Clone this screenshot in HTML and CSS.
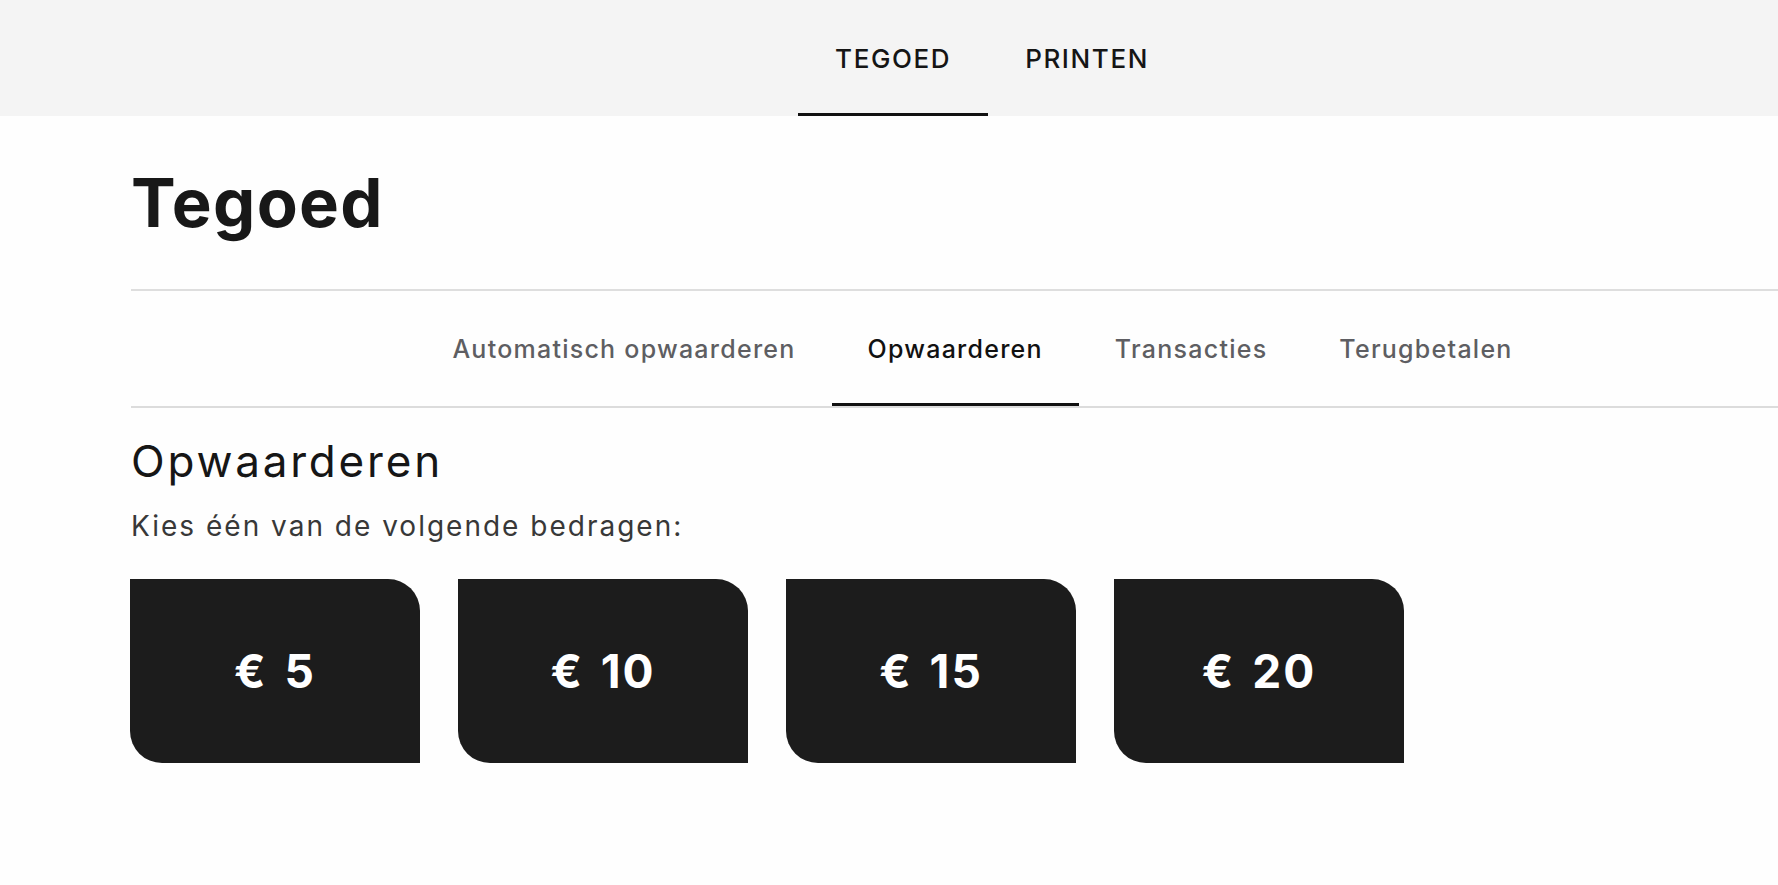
FILE: index.html
```html
<!DOCTYPE html>
<html lang="nl">
<head>
<meta charset="utf-8">
<title>Tegoed</title>
<link rel="stylesheet" href="styles.css">
</head>
<body>
<div class="page">
  <header class="topbar">
    <nav class="topnav">
      <a class="topnav-item is-active">TEGOED</a>
      <a class="topnav-item">PRINTEN</a>
    </nav>
  </header>
  <main class="content">
    <div class="title-block">
      <h1 class="title">Tegoed</h1>
    </div>
    <nav class="subnav">
      <a class="subnav-item">Automatisch opwaarderen</a>
      <a class="subnav-item is-active">Opwaarderen</a>
      <a class="subnav-item">Transacties</a>
      <a class="subnav-item">Terugbetalen</a>
    </nav>
    <section class="topup">
      <h2 class="topup-title">Opwaarderen</h2>
      <p class="topup-lead">Kies één van de volgende bedragen:</p>
      <div class="amounts">
        <button class="amount amount-5">€ 5</button>
        <button class="amount amount-10">€ 10</button>
        <button class="amount amount-15">€ 15</button>
        <button class="amount amount-20">€ 20</button>
      </div>
    </section>
  </main>
</div>
</body>
</html>
```
FILE: styles.css
```css
html, body {
  margin: 0;
  padding: 0;
  overflow: hidden;
  background: #fefefe;
}
body {
  font-family: Inter, "Noto Sans", "DejaVu Sans", sans-serif;
  color: #1a1a1a;
}
.page {
  width: 1976px;
}
.topbar {
  background: #f4f4f4;
  height: 116px;
}
.topnav {
  display: flex;
  justify-content: center;
  height: 100%;
  padding-left: 8px;
}
.topnav-item {
  display: flex;
  align-items: center;
  box-sizing: border-box;
  height: 116px;
  padding: 3px 37px 0 37px;
  font-size: 26px;
  font-weight: 500;
  letter-spacing: 1.6px;
  color: #151515;
  border-bottom: 3px solid transparent;
}
.topnav-item.is-active {
  border-bottom-color: #111;
}
.content {
  padding-left: 131px;
  padding-right: 142px;
}
.title-block {
  padding-top: 53px;
  padding-bottom: 53px;
  border-bottom: 2px solid #dedede;
}
.title {
  margin: 0;
  font-size: 67px;
  line-height: 1;
  font-weight: 700;
  letter-spacing: 1.3px;
  color: #181818;
}
.subnav {
  display: flex;
  justify-content: center;
  border-bottom: 2px solid #dcdcdc;
}
.subnav-item {
  display: flex;
  align-items: center;
  box-sizing: border-box;
  height: 115px;
  padding: 3px 36px 0 36px;
  font-size: 25px;
  font-weight: 500;
  letter-spacing: 1.25px;
  color: #5e5e62;
  border-bottom: 3px solid transparent;
}
.subnav-item.is-active {
  color: #111;
  border-bottom-color: #111;
}
.topup {
  padding-top: 31px;
}
.topup-title {
  margin: 0;
  font-size: 44px;
  line-height: 1;
  font-weight: 400;
  letter-spacing: 2.8px;
  color: #161616;
}
.topup-lead {
  margin: 29px 0 0 0;
  font-size: 28px;
  line-height: 1;
  font-weight: 400;
  letter-spacing: 2px;
  color: #383838;
}
.amounts {
  display: flex;
  gap: 38px;
  margin-top: 39px;
  margin-left: -1px;
}
.amount {
  width: 290px;
  height: 184px;
  border: 0;
  background: #1c1c1c;
  color: #fff;
  font-family: inherit;
  font-size: 46px;
  font-weight: 700;
  letter-spacing: 2px;
  word-spacing: 4px;
  border-radius: 0 32px 0 32px;
  padding: 0;
}
```
